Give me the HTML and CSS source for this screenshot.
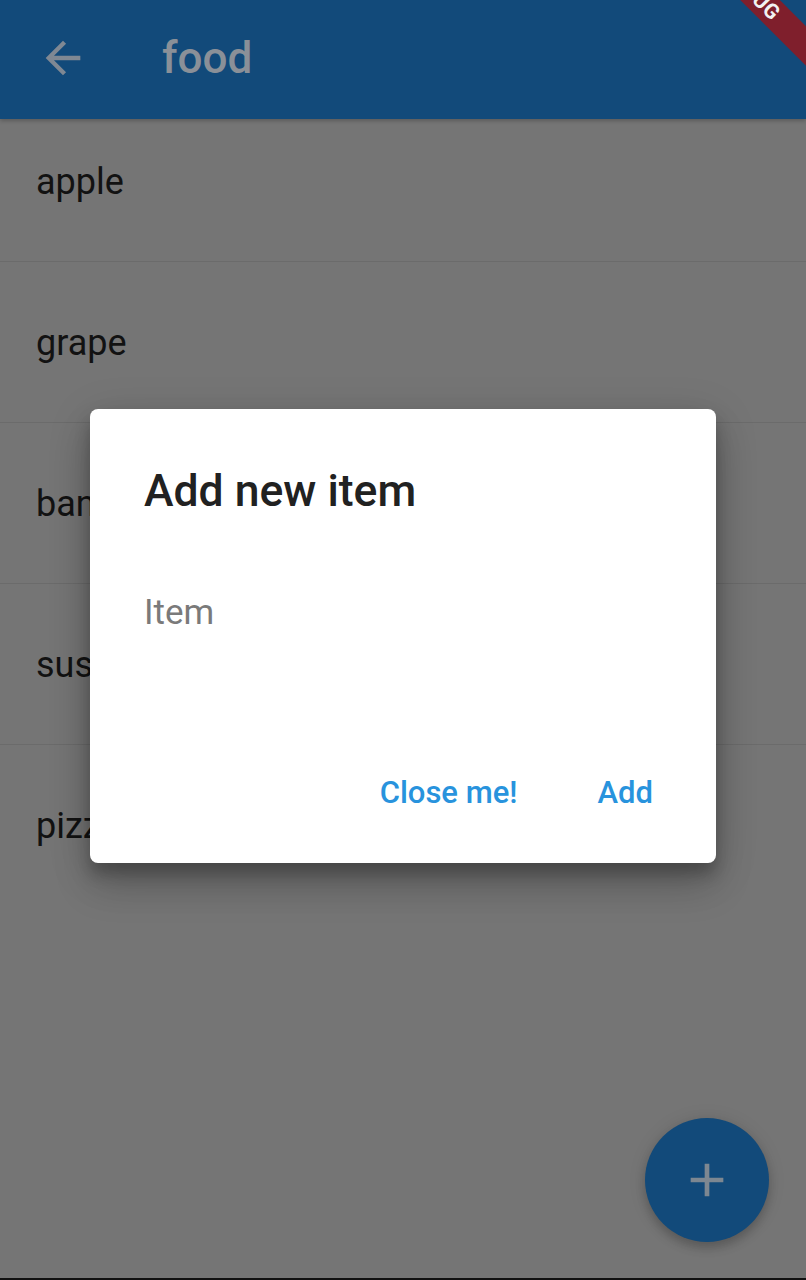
FILE: index.html
```html
<!DOCTYPE html>
<html lang="en">
<head>
<meta charset="utf-8">
<title>food</title>
<link rel="stylesheet" href="styles.css">
</head>
<body>
<div class="screen">
  <header class="appbar">
    <svg class="back" viewBox="0 0 24 24" aria-hidden="true"><path d="M20 11H7.83l5.59-5.59L12 4l-8 8 8 8 1.41-1.41L7.83 13H20v-2z"/></svg>
    <h1 class="title">food</h1>
  </header>
  <ul class="list">
    <li class="item">apple</li>
    <li class="item">grape</li>
    <li class="item">banana</li>
    <li class="item">sushi</li>
    <li class="item">pizza</li>
  </ul>
  <div class="spacer"></div>
  <div class="navline"></div>

  <button class="fab" aria-label="Add">
    <svg viewBox="0 0 24 24" aria-hidden="true"><path d="M19 13h-6v6h-2v-6H5v-2h6V5h2v6h6v2z"/></svg>
  </button>

  <div class="overlay">
    <div class="dialog">
      <h2 class="dialog-title">Add new item</h2>
      <div class="field">Item</div>
      <div class="actions">
        <span class="btn">Close me!</span>
        <span class="btn">Add</span>
      </div>
    </div>
  </div>

  <div class="banner"><span>DEBUG</span></div>
</div>
</body>
</html>
```

FILE: styles.css
```css
* { box-sizing: border-box; }
html, body { margin: 0; padding: 0; }
body {
  width: 806px;
  height: 1280px;
  overflow: hidden;
  background: #757575;
  font-family: Roboto, "Noto Sans", "Liberation Sans", sans-serif;
}
.screen {
  position: relative;
  width: 806px;
  height: 1280px;
  display: flex;
  flex-direction: column;
  overflow: hidden;
  background: #757575;
}
.appbar {
  position: relative;
  z-index: 1;
  height: 119px;
  flex: none;
  display: flex;
  align-items: center;
  padding: 0 0 3px 37px;
  background: #124a7a;
  box-shadow: 0 2px 4px rgba(0,0,0,0.22);
}
.back {
  width: 52px;
  height: 52px;
  fill: #7f8893;
  flex: none;
}
.title {
  margin: 0 0 0 73px;
  font-size: 44px;
  line-height: 1.2;
  font-weight: 500;
  color: #8a9098;
}
.list {
  list-style: none;
  margin: -18px 0 0 0;
  padding: 0;
}
.item {
  height: 161px;
  display: flex;
  align-items: center;
  padding: 3px 0 0 36px;
  border-bottom: 1px solid #6b6b6b;
  font-size: 36px;
  line-height: 1.2;
  color: #121212;
}
.item:last-child { border-bottom-color: transparent; }
.spacer { flex: 1; }
.navline {
  height: 2px;
  flex: none;
  background: #111;
}
.fab {
  position: absolute;
  right: 37px;
  bottom: 38px;
  width: 124px;
  height: 124px;
  border-radius: 50%;
  border: none;
  padding: 0;
  background: #124a7a;
  display: flex;
  align-items: center;
  justify-content: center;
  box-shadow: 0 6px 10px rgba(0,0,0,0.18), 0 1px 18px rgba(0,0,0,0.1);
}
.fab svg {
  width: 56px;
  height: 56px;
  fill: #7d8791;
}
.overlay {
  position: absolute;
  inset: 0;
  display: flex;
  align-items: center;
  justify-content: center;
  padding-bottom: 8px;
  z-index: 2;
}
.dialog {
  width: 626px;
  height: 454px;
  background: #fff;
  border-radius: 8px;
  padding: 56px 63px 52px 54px;
  display: flex;
  flex-direction: column;
  box-shadow: 0 24px 38px rgba(0,0,0,0.16), 0 9px 46px rgba(0,0,0,0.14), 0 11px 15px rgba(0,0,0,0.22);
}
.dialog-title {
  margin: 0;
  font-size: 44.5px;
  line-height: 1.2;
  font-weight: 500;
  color: #212121;
}
.field {
  margin-top: 74px;
  font-size: 35px;
  line-height: 1.2;
  color: #7a7a7a;
}
.actions {
  margin-top: auto;
  display: flex;
  justify-content: flex-end;
  gap: 80px;
}
.btn {
  font-size: 31px;
  line-height: 1.2;
  font-weight: 500;
  color: #2893dd;
}
.banner {
  position: absolute;
  left: 632px;
  top: -22px;
  width: 240px;
  height: 28px;
  transform: rotate(45deg);
  background: #7f1f2c;
  display: flex;
  align-items: center;
  justify-content: center;
  z-index: 3;
}
.banner span {
  font-size: 21px;
  font-weight: 700;
  color: #f2f2f2;
  letter-spacing: 0.5px;
}
```
